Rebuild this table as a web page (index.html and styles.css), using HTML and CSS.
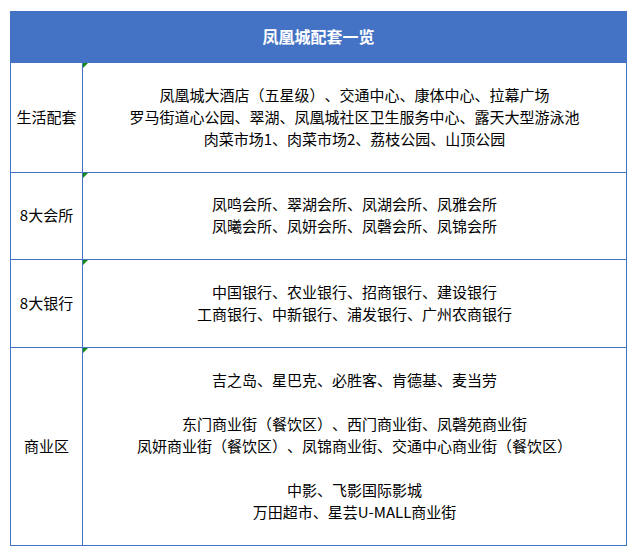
FILE: index.html
```html
<!DOCTYPE html>
<html lang="zh-CN">
<head>
<meta charset="utf-8">
<link rel="stylesheet" href="styles.css">
</head>
<body>
<table class="grid">
  <colgroup><col class="c1"><col class="c2"></colgroup>
  <tr class="head"><th colspan="2">凤凰城配套一览</th></tr>
  <tr class="r1">
    <td class="label">生活配套</td>
    <td class="items">凤凰城大酒店（五星级）、交通中心、康体中心、拉幕广场<br>罗马街道心公园、翠湖、凤凰城社区卫生服务中心、露天大型游泳池<br>肉菜市场1、肉菜市场2、荔枝公园、山顶公园</td>
  </tr>
  <tr class="r2">
    <td class="label">8大会所</td>
    <td class="items">凤鸣会所、翠湖会所、凤湖会所、凤雅会所<br>凤曦会所、凤妍会所、凤磬会所、凤锦会所</td>
  </tr>
  <tr class="r3">
    <td class="label">8大银行</td>
    <td class="items">中国银行、农业银行、招商银行、建设银行<br>工商银行、中新银行、浦发银行、广州农商银行</td>
  </tr>
  <tr class="r4">
    <td class="label">商业区</td>
    <td class="items">吉之岛、星巴克、必胜客、肯德基、麦当劳<br><br>东门商业街（餐饮区）、西门商业街、凤磬苑商业街<br>凤妍商业街（餐饮区）、凤锦商业街、交通中心商业街（餐饮区）<br><br>中影、飞影国际影城<br>万田超市、星芸U-MALL商业街</td>
  </tr>
</table>
</body>
</html>
```
FILE: styles.css
```css
html, body {
  margin: 0;
  padding: 0;
  background: #ffffff;
}
body {
  padding: 11px 0 0 10px;
  font-family: "Noto Sans CJK SC", "Noto Sans", sans-serif;
  color: #000000;
  text-spacing-trim: space-all;
}
.grid {
  border-collapse: collapse;
  width: 616px;
  table-layout: fixed;
}
.c1 { width: 72px; }
.c2 { width: 544px; }
.grid th, .grid td {
  border: 1px solid #4472c4;
  padding: 0 0 2px 0;
  text-align: center;
  vertical-align: middle;
  font-size: 15px;
  line-height: 22px;
  text-spacing-trim: space-all;
}
.head th {
  background: #4472c4;
  color: #ffffff;
  font-weight: bold;
  font-size: 16px;
  height: 48px;
}
.r1 td { height: 107px; }
.r2 td { height: 84px; }
.r3 td { height: 85px; }
.r4 td { height: 195px; }
.items {
  position: relative;
}
.items::before {
  content: "";
  position: absolute;
  left: 0;
  top: 0;
  width: 0;
  height: 0;
  border-top: 5px solid #138a13;
  border-right: 5px solid transparent;
}
```
